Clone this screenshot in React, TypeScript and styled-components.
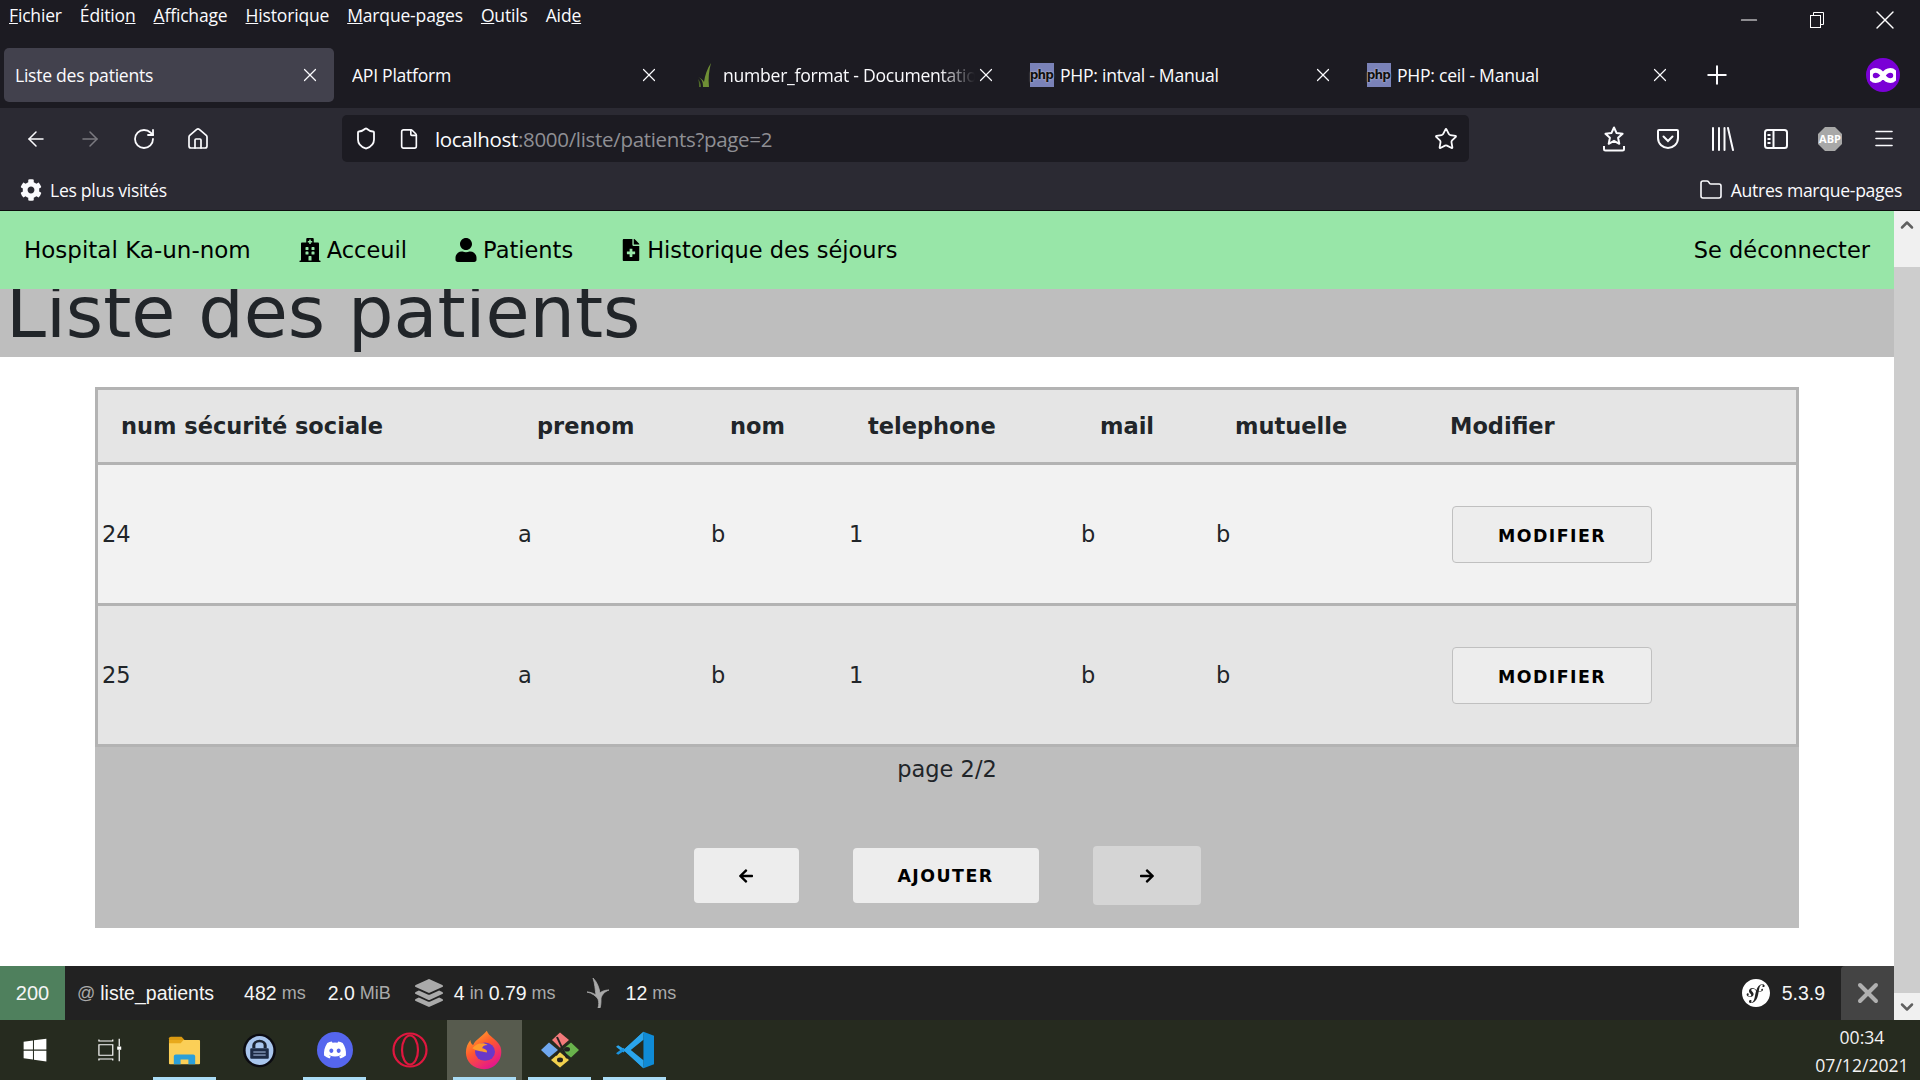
import styled, { createGlobalStyle } from 'styled-components';
import { ArrowLeft, ArrowRight, RotateCw, Home, Shield, File, Star, Menu, Folder, X, Plus, Minus, ChevronUp, ChevronDown } from 'lucide-react';
import { FaHospital, FaUser, FaFileMedical, FaArrowLeft, FaArrowRight, FaCog, FaWindows, FaDiscord, FaLayerGroup } from 'react-icons/fa';
import { SiSymfony } from 'react-icons/si';

const Global = createGlobalStyle`
  html, body { margin: 0; padding: 0; background: #fff; overflow: hidden; }
  * { box-sizing: border-box; }
`;

const uiFont = `"Open Sans", "Noto Sans", sans-serif`;
const pageFont = `"DejaVu Sans", Verdana, sans-serif`;

const Screen = styled.div`
  width: 1920px;
  height: 1080px;
  display: flex;
  flex-direction: column;
  overflow: hidden;
  font-family: ${uiFont};
`;

/* ---- browser chrome ---- */
const MenuRow = styled.div`
  height: 48px;
  background: #1c1b22;
  color: #fbfbfe;
  display: flex;
  padding: 4px 0 0 9px;
  gap: 18px;
  font-size: 17.5px;
  letter-spacing: -0.16px;
  align-items: flex-start;
  line-height: 22px;
`;
const WindowControls = styled.div`
  margin-left: auto;
  display: flex;
  color: #fff;
  height: 32px;
  align-items: center;
`;
const WinBtn = styled.span`
  width: 68px;
  display: flex;
  justify-content: center;
  align-items: center;
  padding-right: 2px;
`;
const TabRow = styled.div`
  height: 60px;
  background: #1c1b22;
  display: flex;
  align-items: flex-start;
  padding-left: 4px;
  color: #fbfbfe;
`;
const Tab = styled.div<{ $active?: boolean }>`
  width: 330px;
  margin-right: 7px;
  height: 54px;
  border-radius: 5px;
  background: ${p => (p.$active ? '#42414d' : 'transparent')};
  display: flex;
  align-items: center;
  padding-left: 11px;
  font-size: 17.6px;
  letter-spacing: -0.27px;
  position: relative;
`;
const TabIcon = styled.span`
  width: 27px;
  height: 24px;
  margin-left: 2px;
  margin-right: 5px;
  display: flex;
  align-items: center;
  justify-content: center;
`;
const TabTitle = styled.span<{ $fade?: boolean }>`
  width: 262px;
  overflow: hidden;
  white-space: nowrap;
  ${p => p.$fade && 'mask-image: linear-gradient(to right, #000 86%, transparent 100%); width: 252px;'}
`;
const TabClose = styled.span<{ $active?: boolean }>`
  position: absolute;
  left: ${p => (p.$active ? 295 : 297)}px;
  top: 16px;
  display: flex;
`;
const PhpIcon = styled.span`
  width: 24px;
  height: 24px;
  background: #7a82b8;
  color: #111;
  font-size: 12px;
  font-family: "DejaVu Sans", sans-serif;
  font-weight: 700;
  letter-spacing: -0.8px;
  display: flex;
  align-items: center;
  justify-content: center;
  text-shadow: 0 0 2px #ddd;
`;
const TabEnd = styled.div`
  margin-left: auto;
  display: flex;
  align-items: center;
  height: 54px;
`;
const NewTab = styled.span`
  position: absolute;
  left: 1702px;
  top: 60px;
  display: flex;
`;
const MaskBadge = styled.span`
  width: 34px;
  height: 34px;
  border-radius: 50%;
  background: #7a00d6;
  margin-right: 20px;
  display: flex;
  align-items: center;
  justify-content: center;
`;
const Toolbar = styled.div`
  height: 64px;
  background: #2b2a33;
  display: flex;
  align-items: center;
  color: #fbfbfe;
  padding: 0 0 3px 24px;
`;
const NavIcons = styled.div`
  display: flex;
  gap: 30px;
  width: 318px;
  flex-shrink: 0;
`;
const ToolIcon = styled.span<{ $dim?: boolean; $indent?: number }>`
  width: 24px;
  height: 24px;
  display: flex;
  align-items: center;
  justify-content: center;
  flex-shrink: 0;
  margin-left: ${p => p.$indent ?? 0}px;
  color: ${p => (p.$dim ? '#7b7a80' : '#fbfbfe')};
`;
const UrlBar = styled.div`
  width: 1127px;
  height: 47px;
  flex-shrink: 0;
  background: #1c1b22;
  border-radius: 5px;
  display: flex;
  align-items: center;
  padding: 0 11px 0 12px;
  font-size: 20.5px;
  letter-spacing: -0.32px;
`;
const UrlHost = styled.span`
  color: #fbfbfe;
`;
const UrlRest = styled.span`
  color: #8f8f94;
`;
const UrlText = styled.span`
  margin-left: 14px;
  flex: 1;
`;
const RightIcons = styled.div`
  display: flex;
  gap: 30px;
  margin-left: 133px;
`;
const BookmarkBar = styled.div`
  height: 39px;
  background: #2b2a33;
  border-bottom: 1px solid #0c0c0d;
  display: flex;
  align-items: center;
  justify-content: space-between;
  color: #fbfbfe;
  padding: 0 18px 3px 20px;
  font-size: 17.6px;
  letter-spacing: -0.3px;
`;
const Bookmark = styled.span`
  display: flex;
  align-items: center;
  gap: 8px;
`;

/* ---- the page ---- */
const Viewport = styled.div`
  flex: 1;
  display: flex;
  min-height: 0;
`;
const PageColumn = styled.div`
  flex: 1;
  display: flex;
  flex-direction: column;
  min-width: 0;
  font-family: ${pageFont};
  color: #212529;
`;
const Navbar = styled.nav`
  height: 78px;
  background: #98e6a8;
  display: flex;
  align-items: center;
  padding: 0 24px 0;
  gap: 47px;
  color: #000;
  font-size: 22.5px;
`;
const Brand = styled.span`
  font-size: 23px;
`;
const NavItem = styled.span`
  display: flex;
  align-items: center;
  gap: 5px;
`;
const Logout = styled(NavItem)`
  margin-left: auto;
`;
const PageHeader = styled.div`
  height: 68px;
  background: #bebebe;
  overflow: hidden;
  padding-left: 6px;
`;
const Title = styled.h1`
  margin: -19px 0 0;
  font-size: 71.7px;
  font-weight: 400;
  line-height: 84px;
  white-space: nowrap;
`;
const Content = styled.main`
  flex: 1;
  padding: 30px 95px 38px;
  background: #fff;
  display: flex;
  flex-direction: column;
`;
const TablePanel = styled.div`
  background: #bebebe;
  flex: 1;
  display: flex;
  flex-direction: column;
  align-items: center;
`;
const Table = styled.div`
  width: 100%;
  border: 3px solid #b3b3b3;
`;
const Row = styled.div<{ $bg: string; $head?: boolean }>`
  box-sizing: content-box;
  display: grid;
  grid-template-columns: 416px 193px 138px 232px 135px 236px 1fr;
  height: ${p => (p.$head ? 72 : 138)}px;
  background: ${p => p.$bg};
  align-items: center;
  font-size: 22.5px;
  font-weight: ${p => (p.$head ? 700 : 400)};
  padding-left: ${p => (p.$head ? 23 : 4)}px;
  &:not(:last-child) {
    border-bottom: 3px solid #b3b3b3;
  }
`;
const ModifyHead = styled.span`
  margin-left: -21px;
`;
const ModifyButton = styled.button`
  width: 200px;
  height: 57px;
  background: #ededed;
  border: 1px solid #c0c0c0;
  border-radius: 4px;
  font-family: ${pageFont};
  font-weight: 700;
  font-size: 17.4px;
  letter-spacing: 1.45px;
  color: #000;
  padding: 4px 0 0;
`;
const PageLabel = styled.div`
  font-size: 22.5px;
  line-height: 44px;
  margin-bottom: 55px;
`;
const Pager = styled.div`
  display: flex;
  align-items: center;
  gap: 54px;
`;
const PagerButton = styled.button<{ $w: number; $light?: boolean }>`
  width: ${p => p.$w}px;
  height: ${p => (p.$light ? 59 : 55)}px;
  background: ${p => (p.$light ? '#d5d5d5' : '#ededed')};
  border: none;
  border-radius: 4px;
  font-family: ${pageFont};
  font-weight: 700;
  font-size: 17.4px;
  letter-spacing: 1.45px;
  color: #000;
  display: flex;
  align-items: center;
  justify-content: center;
  padding: 0;
`;
const Scrollbar = styled.div`
  width: 26px;
  background: #f0f0f0;
  display: flex;
  flex-direction: column;
  color: #606060;
`;
const ScrollArrow = styled.div`
  height: 27px;
  display: flex;
  align-items: center;
  justify-content: center;
`;
const ScrollTrack = styled.div`
  flex: 1;
  padding-top: 29px;
`;
const ScrollThumb = styled.div`
  height: 100%;
  background: #cdcdcd;
`;

/* ---- symfony toolbar ---- */
const DevBar = styled.div`
  height: 54px;
  background: #222;
  color: #f5f5f5;
  display: flex;
  align-items: center;
  border-top: 0;
  font-family: "Liberation Sans", Arial, sans-serif;
  font-size: 19.5px;
`;
const Status = styled.div`
  width: 65px;
  height: 100%;
  background: #4f805d;
  display: flex;
  align-items: center;
  justify-content: center;
  font-size: 20px;
  margin-right: 12px;
`;
const DevItem = styled.span<{ $gap?: number; $muted?: boolean }>`
  margin-right: ${p => p.$gap ?? 22}px;
  display: flex;
  align-items: center;
  gap: 5px;
  white-space: pre;
  ${p => p.$muted && 'color: #aaa;'}
`;
const Unit = styled.span`
  color: #aaa;
  font-size: 18px;
`;
const DevClose = styled.div`
  width: 53px;
  height: 100%;
  background: #444;
  border-top-left-radius: 4px;
  display: flex;
  align-items: center;
  justify-content: center;
  color: #b0b0b0;
  margin-left: 4px;
`;
const DevRight = styled.div`
  margin-left: auto;
  display: flex;
  align-items: center;
  height: 100%;
  gap: 12px;
`;
const SfLogo = styled.span`
  width: 28px;
  height: 28px;
  display: flex;
  color: #fff;
`;

/* ---- windows taskbar ---- */
const Taskbar = styled.div`
  height: 60px;
  background: #262b1f;
  display: flex;
  color: #fff;
  position: relative;
`;
const TaskSlot = styled.div<{ $open?: boolean; $active?: boolean }>`
  width: 75px;
  height: 60px;
  display: flex;
  align-items: center;
  justify-content: center;
  background: ${p => (p.$active ? '#575b4e' : 'transparent')};
  position: relative;
  &::after {
    content: '';
    display: ${p => (p.$open ? 'block' : 'none')};
    position: absolute;
    left: 6px;
    right: 6px;
    bottom: 0;
    height: 3px;
    background: #aadcf5;
  }
`;
const StartSlot = styled(TaskSlot)`
  margin-left: -2px;
  width: 74px;
`;
const Clock = styled.div`
  margin-left: auto;
  width: 116px;
  text-align: center;
  padding-top: 3px;
  font-size: 17.6px;
  line-height: 28px;
  color: #f2f2f2;
`;
const DiscordBadge = styled.span`
  width: 36px;
  height: 36px;
  border-radius: 50%;
  background: #5566ee;
  display: flex;
  align-items: center;
  justify-content: center;
  color: #fff;
`;

const FirefoxIcon = () => (
  <svg width="40" height="40" viewBox="0 0 44 48" preserveAspectRatio="none">
    <defs>
      <linearGradient id="ff" x1="0" y1="0" x2="0.6" y2="1">
        <stop offset="0" stopColor="#ffbd2e" />
        <stop offset="0.5" stopColor="#ff5a2d" />
        <stop offset="1" stopColor="#e5178a" />
      </linearGradient>
    </defs>
    <path d="M24 1c2 7 11 10 15 19 4 13-5 27-18 27C9 47 1 38 1 27c0-6 2-11 5-15 0 3 1 5 3 6 2-6 9-9 15-17z" fill="url(#ff)" />
    <circle cx="22" cy="26" r="11" fill="#6a37c9" />
    <path d="M8 22c4-6 12-8 17-4-4 0-6 2-6 4 4 1 6 3 5 5-3-1-11-1-16-5z" fill="#ff9a2c" />
  </svg>
);

const KeepassIcon = () => (
  <svg width="35" height="35" viewBox="0 0 34 46" preserveAspectRatio="none">
    <ellipse cx="17" cy="23" rx="16" ry="22" fill="#0b0b12" />
    <ellipse cx="17" cy="23" rx="13.5" ry="19" fill="#a9c6ee" />
    <path d="M10 20v-4a7 7 0 0 1 14 0v4h-3v-4a4 4 0 0 0-8 0v4z" fill="#1c2433" />
    <rect x="8" y="20" width="18" height="14" rx="1" fill="#1d2b46" />
    <rect x="11" y="24" width="12" height="2" fill="#7d8fb0" />
    <rect x="11" y="28" width="12" height="2" fill="#7d8fb0" />
  </svg>
);

const ExplorerIcon = () => (
  <svg width="33" height="31" viewBox="0 0 34 38" preserveAspectRatio="none">
    <path d="M1 4a2 2 0 0 1 2-2h11l3 4h-16z" fill="#d99a12" />
    <rect x="1" y="6" width="32" height="30" rx="1" fill="#fbcf57" />
    <path d="M1 6h15l-3 4H1z" fill="#e8a91b" />
    <path d="M6 36V26a2 2 0 0 1 2-2h18a2 2 0 0 1 2 2v10h-7v-6h-8v6z" fill="#2b9fd9" />
  </svg>
);

const TaskViewIcon = () => (
  <svg width="24" height="24" viewBox="0 0 26 32" preserveAspectRatio="none" fill="none" stroke="#fff" strokeWidth="1.3">
    <path d="M1 2v2h15V2M1 30v-2h15v2" />
    <rect x="1" y="9" width="15" height="14" />
    <path d="M23 1v10M23 16v15" />
    <rect x="21.5" y="12" width="3" height="3" fill="#fff" />
  </svg>
);

const OperaIcon = () => (
  <svg width="36" height="36" viewBox="0 0 36 36" fill="none" stroke="#e0173f" strokeWidth="2.2">
    <circle cx="18" cy="18" r="16.500" />
    <ellipse cx="18" cy="18" rx="8" ry="14.500" />
  </svg>
);

const GitIcon = () => (
  <svg width="38" height="38" viewBox="0 0 38 50" preserveAspectRatio="none">
    <path d="M19 2l9 10-9 10-8-10z" fill="#f27a7a" />
    <path d="M8 15l9 10-9 10-8-10z" fill="#6fa8ef" />
    <path d="M30 15l8 10-8 10-9-10z" fill="#69b34c" />
    <path d="M19 28l9 10-9 10-9-10z" fill="#f2d14e" />
    <path d="M16 8l10 28" stroke="#222" strokeWidth="2" fill="none" />
    <path d="M19 24l-4 8" stroke="#222" strokeWidth="2" fill="none" />
    <circle cx="26" cy="24" r="3" fill="#222" />
    <circle cx="19" cy="38" r="3" fill="#222" />
  </svg>
);

const VsCodeIcon = () => (
  <svg width="38" height="38" viewBox="0 0 36 48" preserveAspectRatio="none">
    <path d="M26 1l10 5v36l-10 5z" fill="#0f8bd6" />
    <path d="M26 1L8 23l-6-5-2 2 7 7 19-24z" fill="#2aa5ec" />
    <path d="M26 47L8 25l-6 5-2-2 7-7 19 24z" fill="#1a93df" />
    <path d="M26 1v10L14 24l12 13v10L7 24z" fill="#2aa5ec" />
  </svg>
);

const TwigIcon = () => (
  <svg width="24" height="30" viewBox="0 0 24 30">
    <path d="M12 30c1-3 1-6 0-9-2-3-6-6-11-7 3 0 6 1 9 3-1-6-1-11-3-17 4 4 6 9 7 15 1-1 4-3 9-3-5 2-7 5-8 8 0 4 0 7-1 10z" fill="#aaa" stroke="#aaa" strokeWidth="0.8" />
  </svg>
);

const PocketIcon = () => (
  <svg width="24" height="24" viewBox="0 0 24 24" fill="none" stroke="currentColor" strokeWidth="2">
    <path d="M3 3h18a1 1 0 0 1 1 1v7c0 6-5 10-10 10S2 17 2 11V4a1 1 0 0 1 1-1z" />
    <path d="M7.500 9.500L12 14l4.500-4.500" strokeLinecap="round" />
  </svg>
);

const SaveStarIcon = () => (
  <svg width="24" height="26" viewBox="0 0 24 26" fill="none" stroke="currentColor" strokeWidth="2" strokeLinejoin="round">
    <path d="M12 1.500l2.600 5.600 6 .7-4.500 4 1.200 6-5.300-3-5.300 3 1.200-6-4.500-4 6-.7z" />
    <path d="M2 20v3a1.500 1.500 0 0 0 1.500 1.500h17A1.500 1.500 0 0 0 22 23v-3" />
  </svg>
);

const LibraryIcon = () => (
  <svg width="24" height="24" viewBox="0 0 24 24" fill="none" stroke="currentColor" strokeWidth="2" strokeLinecap="round">
    <path d="M3 1v22M9 1v22M14.500 1v22M18 1l5 22" />
  </svg>
);

const SidebarIcon = () => (
  <svg width="24" height="22" viewBox="0 0 24 22" fill="none" stroke="currentColor" strokeWidth="2">
    <rect x="1" y="2" width="22" height="18" rx="2.500" />
    <path d="M9.500 2v18" />
    <path d="M3.500 7h3M3.500 11h3M3.500 15h3" />
  </svg>
);

const AbpIcon = () => (
  <svg width="24" height="24" viewBox="0 0 24 24">
    <path d="M7 0h10l7 7v10l-7 7H7l-7-7V7z" fill="#a8a8a8" />
    <text x="12" y="16" textAnchor="middle" fontSize="11" fontWeight="700" fontFamily="Open Sans, sans-serif" fill="#fff">ABP</text>
  </svg>
);

const MaskIcon = () => (
  <svg width="26" height="15" viewBox="0 0 28 16" fill="none" stroke="#fff" strokeWidth="5">
    <path d="M14 8C11 3 8 2.500 6 2.500a5.500 5.500 0 0 0 0 11c2 0 5-.5 8-5.500zm0 0c3-5 6-5.500 8-5.500a5.500 5.500 0 0 1 0 11c-2 0-5-.5-8-5.500z" />
  </svg>
);

const GrassFavicon = () => (
  <svg width="16" height="24" viewBox="0 0 16 24">
    <path d="M6 24c0-5-1-8-5-10 3 1 5 3 6 5 1-7 3-13 7-19-2 7-3 16-2 24z" fill="#6f8f35" />
    <path d="M2 24c0-3 0-6-1-8 2 2 3 5 3 8z" fill="#4f6a28" />
  </svg>
);

const RestoreIcon = () => (
  <svg width="14" height="16" viewBox="0 0 14 16" fill="none" stroke="currentColor" strokeWidth="1">
    <rect x="0.500" y="3.500" width="10" height="12" />
    <path d="M3.500 3.500v-3h10v12h-3" />
  </svg>
);

const patients = [
  { id: 24, bg: '#f2f2f2' },
  { id: 25, bg: '#e5e5e5' },
];

const tabs = [
  { title: 'Liste des patients', active: true },
  { title: 'API Platform' },
  { title: 'number_format - Documentation', icon: <GrassFavicon />, fade: true },
  { title: 'PHP: intval - Manual', icon: <PhpIcon>php</PhpIcon> },
  { title: 'PHP: ceil - Manual', icon: <PhpIcon>php</PhpIcon> },
];

const App = () => {
  return (
    <Screen>
      <Global />
      <MenuRow>
        <span><u>F</u>ichier</span>
        <span>Éditio<u>n</u></span>
        <span><u>A</u>ffichage</span>
        <span><u>H</u>istorique</span>
        <span><u>M</u>arque-pages</span>
        <span><u>O</u>utils</span>
        <span>Aid<u>e</u></span>
        <WindowControls>
          <WinBtn><Minus size={26} strokeWidth={1} /></WinBtn>
          <WinBtn><RestoreIcon /></WinBtn>
          <WinBtn><X size={32} strokeWidth={1} /></WinBtn>
        </WindowControls>
      </MenuRow>
      <TabRow>
        {tabs.map(t => (
          <Tab key={t.title} $active={t.active}>
            {t.icon && <TabIcon>{t.icon}</TabIcon>}
            <TabTitle $fade={t.fade}>{t.title}</TabTitle>
            <TabClose $active={t.active}><X size={22} strokeWidth={1.3} /></TabClose>
          </Tab>
        ))}
        <NewTab><Plus size={30} strokeWidth={1.6} /></NewTab>
        <TabEnd>
          <MaskBadge><MaskIcon /></MaskBadge>
        </TabEnd>
      </TabRow>
      <Toolbar>
        <NavIcons>
          <ToolIcon><ArrowLeft size={30} strokeWidth={1.5} /></ToolIcon>
          <ToolIcon $dim><ArrowRight size={30} strokeWidth={1.5} /></ToolIcon>
          <ToolIcon><RotateCw size={26} strokeWidth={1.8} /></ToolIcon>
          <ToolIcon><Home size={26} strokeWidth={1.7} /></ToolIcon>
        </NavIcons>
        <UrlBar>
          <ToolIcon><Shield size={25} strokeWidth={1.8} /></ToolIcon>
          <ToolIcon $indent={19}><File size={22} strokeWidth={1.8} /></ToolIcon>
          <UrlText>
            <UrlHost>localhost</UrlHost>
            <UrlRest>:8000/liste/patients?page=2</UrlRest>
          </UrlText>
          <ToolIcon><Star size={24} strokeWidth={1.8} /></ToolIcon>
        </UrlBar>
        <RightIcons>
          <ToolIcon><SaveStarIcon /></ToolIcon>
          <ToolIcon><PocketIcon /></ToolIcon>
          <ToolIcon><LibraryIcon /></ToolIcon>
          <ToolIcon><SidebarIcon /></ToolIcon>
          <ToolIcon><AbpIcon /></ToolIcon>
          <ToolIcon><Menu size={29} strokeWidth={1.6} /></ToolIcon>
        </RightIcons>
      </Toolbar>
      <BookmarkBar>
        <Bookmark><FaCog size={22} />Les plus visités</Bookmark>
        <Bookmark><Folder size={24} strokeWidth={1.6} />Autres marque-pages</Bookmark>
      </BookmarkBar>
      <Viewport>
        <PageColumn>
          <Navbar>
            <Brand>Hospital Ka-un-nom</Brand>
            <NavItem><FaHospital size={24} />Acceuil</NavItem>
            <NavItem><FaUser size={24} />Patients</NavItem>
            <NavItem><FaFileMedical size={22} />Historique des séjours</NavItem>
            <Logout>Se déconnecter</Logout>
          </Navbar>
          <PageHeader>
            <Title>Liste des patients</Title>
          </PageHeader>
          <Content>
            <TablePanel>
              <Table>
                <Row $bg="#e5e5e5" $head>
                  <span>num sécurité sociale</span>
                  <span>prenom</span>
                  <span>nom</span>
                  <span>telephone</span>
                  <span>mail</span>
                  <span>mutuelle</span>
                  <ModifyHead>Modifier</ModifyHead>
                </Row>
                {patients.map(p => (
                  <Row key={p.id} $bg={p.bg}>
                    <span>{p.id}</span>
                    <span>a</span>
                    <span>b</span>
                    <span>1</span>
                    <span>b</span>
                    <span>b</span>
                    <span><ModifyButton>MODIFIER</ModifyButton></span>
                  </Row>
                ))}
              </Table>
              <PageLabel>page 2/2</PageLabel>
              <Pager>
                <PagerButton $w={105}><FaArrowLeft size={16} /></PagerButton>
                <PagerButton $w={186}>AJOUTER</PagerButton>
                <PagerButton $w={108} $light><FaArrowRight size={16} /></PagerButton>
              </Pager>
            </TablePanel>
          </Content>
          <DevBar>
            <Status>200</Status>
            <DevItem $gap={30}><Unit>@</Unit>liste_patients</DevItem>
            <DevItem>482<Unit>ms</Unit></DevItem>
            <DevItem $gap={24}>2.0<Unit>MiB</Unit></DevItem>
            <DevItem $gap={11} $muted><FaLayerGroup size={28} /></DevItem>
            <DevItem $gap={30}>4<Unit>in</Unit>0.79<Unit>ms</Unit></DevItem>
            <DevItem $gap={16}><TwigIcon /></DevItem>
            <DevItem>12<Unit>ms</Unit></DevItem>
            <DevRight>
              <SfLogo><SiSymfony size={28} /></SfLogo>
              <span>5.3.9</span>
              <DevClose><X size={32} strokeWidth={3} /></DevClose>
            </DevRight>
          </DevBar>
        </PageColumn>
        <Scrollbar>
          <ScrollArrow><ChevronUp size={20} strokeWidth={3} /></ScrollArrow>
          <ScrollTrack><ScrollThumb /></ScrollTrack>
          <ScrollArrow><ChevronDown size={20} strokeWidth={3} /></ScrollArrow>
        </Scrollbar>
      </Viewport>
      <Taskbar>
        <StartSlot><FaWindows size={26} /></StartSlot>
        <TaskSlot><TaskViewIcon /></TaskSlot>
        <TaskSlot $open><ExplorerIcon /></TaskSlot>
        <TaskSlot><KeepassIcon /></TaskSlot>
        <TaskSlot $open><DiscordBadge><FaDiscord size={24} /></DiscordBadge></TaskSlot>
        <TaskSlot><OperaIcon /></TaskSlot>
        <TaskSlot $open $active><FirefoxIcon /></TaskSlot>
        <TaskSlot $open><GitIcon /></TaskSlot>
        <TaskSlot $open><VsCodeIcon /></TaskSlot>
        <Clock>00:34<br />07/12/2021</Clock>
      </Taskbar>
    </Screen>
  );
};

export default App;
